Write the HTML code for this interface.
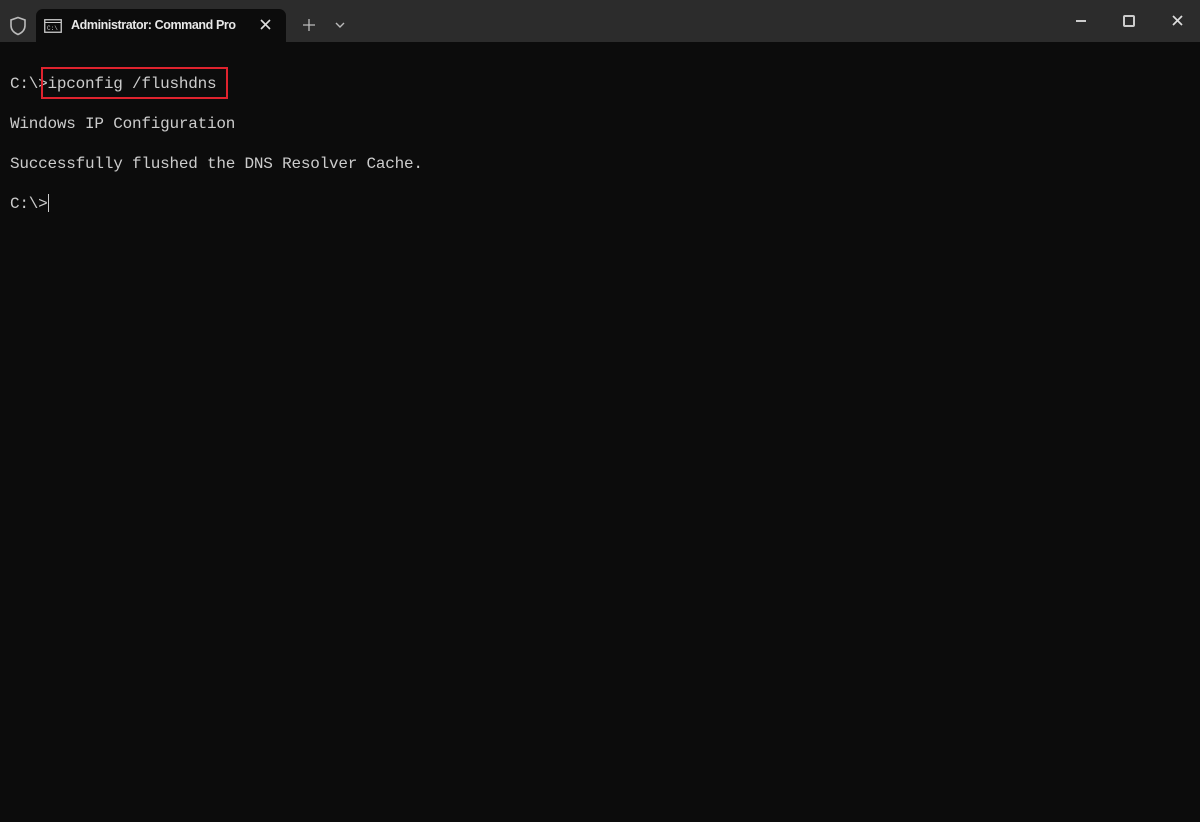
<!DOCTYPE html>
<html><head><style>
body{margin:0;width:1200px;height:822px;background:#0c0c0c;overflow:hidden;font-family:"Liberation Sans",sans-serif}
.bar{position:absolute;left:0;top:0;width:1200px;height:42px;background:#2c2c2c}
.tab{position:absolute;left:36px;top:9px;width:250px;height:33px;background:#0c0c0c;border-radius:7px 7px 0 0}
.t{position:absolute;color:#e8e8e8;font-size:12.5px;font-weight:bold;letter-spacing:-0.4px}
.term{position:absolute;left:10px;top:74px;font-family:"Liberation Mono",monospace;font-size:16px;line-height:20px;color:#cccccc;white-space:pre;letter-spacing:-0.22px}
.box{position:absolute;left:41px;top:67px;width:183px;height:28px;border:2px solid #e0232e}
</style></head><body>
<div class="bar"></div>
<svg style="position:absolute;left:9px;top:16px" width="18" height="20" viewBox="0 0 18 20"><path d="M9 1.5 L16 4 V9.5 C16 14 12.5 17 9 18.5 C5.5 17 2 14 2 9.5 V4 Z" fill="none" stroke="#bbb" stroke-width="1.6"/></svg>
<div class="tab"></div>
<svg style="position:absolute;left:44px;top:19px" width="18" height="14" viewBox="0 0 18 14"><rect x="0.75" y="0.75" width="16.5" height="12.5" fill="none" stroke="#ccc" stroke-width="1.3"/><line x1="1" y1="3.5" x2="17" y2="3.5" stroke="#ccc" stroke-width="1"/><text x="3" y="11" font-size="6" fill="#ccc" font-family="Liberation Mono">C:\</text></svg>
<div class="t" style="left:71px;top:18px">Administrator: Command Pro</div>
<svg style="position:absolute;left:260px;top:19px" width="11" height="11"><path d="M1 1L10 10M10 1L1 10" stroke="#ddd" stroke-width="1.6"/></svg>
<svg style="position:absolute;left:303px;top:19px" width="12" height="12"><path d="M6 0V12M0 6H12" stroke="#bbb" stroke-width="1.3"/></svg>
<svg style="position:absolute;left:335px;top:22px" width="10" height="6"><path d="M1 1L5 5L9 1" fill="none" stroke="#bbb" stroke-width="1.4"/></svg>
<div style="position:absolute;left:1076px;top:20px;width:10px;height:1.5px;background:#ccc"></div>
<div style="position:absolute;left:1123px;top:15px;width:8px;height:8px;border:2px solid #ccc;border-radius:2px"></div>
<svg style="position:absolute;left:1172px;top:15px" width="11" height="11"><path d="M1 1L10 10M10 1L1 10" stroke="#ddd" stroke-width="1.7"/></svg>
<div class="term">C:\&gt;ipconfig /flushdns

Windows IP Configuration

Successfully flushed the DNS Resolver Cache.

C:\&gt;<span style="display:inline-block;width:1px;height:18px;background:#ccc;vertical-align:-4px"></span></div>
<div class="box"></div>
</body></html>
